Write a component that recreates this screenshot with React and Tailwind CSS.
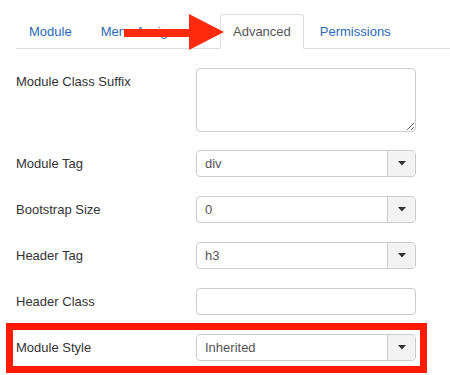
import { useState } from 'react'

function Caret() {
    return (
        <svg width="8" height="5" viewBox="0 0 8 5" className="block">
            <path d="M0 0 L8 0 L4 4.5 Z" fill="#333" />
        </svg>
    );
}

function SelectBox({ value }) {
    return (
        <div className="flex w-[220px] h-[27px] border border-[#ccc] rounded-[4px] bg-white overflow-hidden">
            <div className="flex-1 flex items-center pl-2 text-[13px] text-[#555]">{value}</div>
            <div className="w-[28px] flex items-center justify-center bg-[#f3f3f3] border-l border-[#ccc]">
                <Caret />
            </div>
        </div>
    );
}

function Row({ label, children, className = "mb-[19px]" }) {
    return (
        <div className={`flex ${className}`}>
            <div className="w-[196px] shrink-0 pl-4 pt-[5px] text-[13px] leading-[18px] text-[#333]">{label}</div>
            {children}
        </div>
    );
}

export default function App() {
    const [suffix, setSuffix] = useState("");
    const [headerClass, setHeaderClass] = useState("");

    const tabs = ["Module", "Menu Assignment", "Advanced", "Permissions"];

    return (
        <div className="relative w-[450px] h-[375px] bg-white overflow-hidden" style={{ fontFamily: '"Liberation Sans", Arial, sans-serif' }}>
            {/* tabs */}
            <div className="pt-[14px] pl-4">
                <div className="flex h-[35px] border-b border-[#ddd]">
                    {tabs.map((t) => (
                        <div
                            key={t}
                            className={
                                t === "Advanced"
                                    ? "mr-[3px] -mb-px h-[35px] px-3 flex items-center text-[13px] text-[#555] bg-white border border-[#ddd] border-b-white rounded-t-[4px]"
                                    : "mr-[3px] h-[35px] px-[13px] flex items-center text-[13px] text-[#2a69b8]"
                            }
                        >
                            {t}
                        </div>
                    ))}
                </div>
            </div>

            {/* form */}
            <div className="mt-[19px]">
                <Row label="Module Class Suffix" className="mb-[18px]">
                    <textarea
                        value={suffix}
                        onChange={(e) => setSuffix(e.target.value)}
                        className="w-[220px] h-[64px] border border-[#ccc] rounded-[4px] outline-none px-2 text-[13px]"
                    />
                </Row>
                <Row label="Module Tag">
                    <SelectBox value="div" />
                </Row>
                <Row label="Bootstrap Size">
                    <SelectBox value="0" />
                </Row>
                <Row label="Header Tag">
                    <SelectBox value="h3" />
                </Row>
                <Row label="Header Class">
                    <input
                        type="text"
                        value={headerClass}
                        onChange={(e) => setHeaderClass(e.target.value)}
                        className="w-[220px] h-[27px] border border-[#ccc] rounded-[4px] outline-none px-2 text-[13px]"
                    />
                </Row>
                <Row label="Module Style">
                    <SelectBox value="Inherited" />
                </Row>
            </div>

            {/* annotations */}
            <div className="absolute left-[6px] top-[323px] w-[421px] h-[50px] border-[7px] border-[#ff1a00]" />
            <svg className="absolute left-0 top-0" width="450" height="60" viewBox="0 0 450 60">
                <rect x="124" y="29" width="68" height="8" fill="#ff2a0c" />
                <path d="M189 14 L224 32 L189 50 Z" fill="#ff2a0c" />
            </svg>
        </div>
    );
}
